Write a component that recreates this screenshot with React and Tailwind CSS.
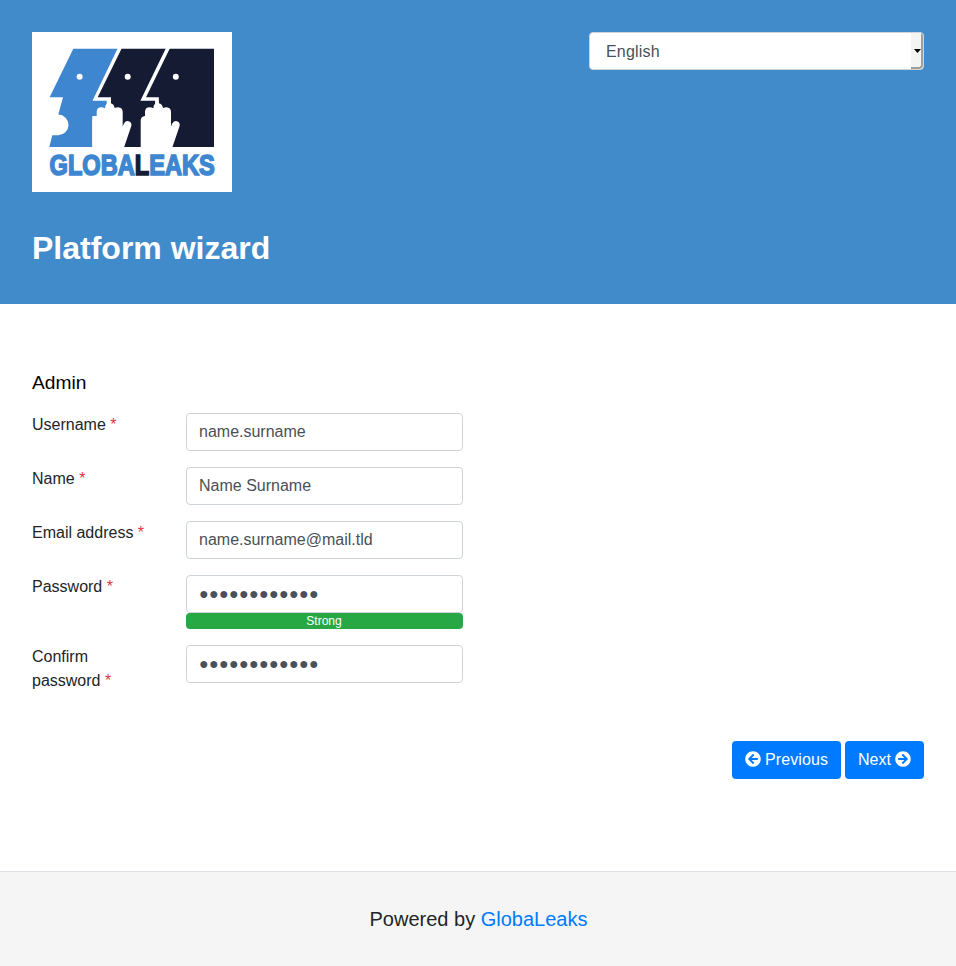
import React from "react";
import { FaArrowCircleLeft, FaArrowCircleRight } from "react-icons/fa";

const HAND =
  "M108.7 115.5V88Q109 84.4 113 84V79.5Q113.4 75.2 117.3 75.2Q119.6 75.2 121.3 76.3Q121.5 72.6 123.3 71.6V68H126.8V71.2Q130.3 72 131 76Q132.5 75.2 134.3 75.2Q139 75.5 139 80V94.5L140.2 91.5Q142 88.6 145 89.2Q148.4 90.4 147.6 94L140.3 115.5Z";

function Logo() {
  return (
    <svg width="200" height="160" viewBox="0 0 200 160" className="block bg-white">
      <path
        fill="#3e87d0"
        d="M41.3 16.8H85.5L60.5 68.8H74.7V84H60.3V115H17.3L20.3 103.3H26A10.3 10.3 0 0 0 26.3 82.6L31 65.2H17.6Z"
      />
      <path fill="#161b34" d="M89.5 16.8H182V115H82V74H79V65.2H65.7Z" />
      <path fill="#fff" d="M134 16H138L114 65.2H126.8V74H123.3V68.8H108.4Z" />
      <path fill="#fff" d={HAND} transform="translate(-48.3 0)" />
      <path fill="#fff" d={HAND} />
      <circle cx="47.6" cy="44.8" r="3" fill="#fff" />
      <circle cx="95.7" cy="44.8" r="3" fill="#fff" />
      <circle cx="143.8" cy="44.8" r="3" fill="#fff" />
      <text
        transform="translate(17.6 143.2) scale(0.787 1)"
        fontFamily="'Liberation Sans', Arial, sans-serif"
        fontWeight="700"
        fontSize="30"
        strokeWidth="1.7"
        fill="#3e87d0"
        stroke="#3e87d0"
        style={{ fontKerning: "none" }}
      >
        GLOBA
        <tspan fill="#161b34" stroke="#161b34">L</tspan>
        EAKS
      </text>
    </svg>
  );
}

function Field({ label, value, masked, strength }) {
  return (
    <div className="mb-4 flex">
      <label className="w-[154px] shrink-0 pr-10">
        {label} <span className="text-[#dc3545]">*</span>
      </label>
      <div className="w-[277px]">
        <div
          className={
            "flex h-[38px] items-center rounded border border-[#ced4da] bg-white px-3 text-[#495057]" +
            (masked ? " tracking-[0.34px]" : "")
          }
        >
          {value}
        </div>
        {strength && (
          <div className="flex h-4 items-center justify-center rounded bg-[#28a745] pr-px text-xs leading-4 text-white">
            {strength}
          </div>
        )}
      </div>
    </div>
  );
}

export default function App() {
  const dots = "●".repeat(12);
  return (
    <div className="flex h-[966px] flex-col bg-white font-['Liberation_Sans',Arial,sans-serif] text-base leading-6 text-[#212529]">
      <header className="h-[304px] bg-[#428bca] p-8">
        <div className="flex items-start justify-between">
          <Logo />
          <div className="flex h-[38px] w-[335px] overflow-hidden rounded border border-[#ced4da] bg-white text-[#495057]">
            <span className="flex-1 pt-px pl-4 tracking-[0.2px] leading-9">English</span>
            <span className="flex w-3 items-center justify-center rounded-br-sm border-r-2 border-b-2 border-[#a09f9b] bg-[#f4f4f3]">
              <svg width="7" height="4" viewBox="0 0 7 4" className="mt-0.5 shrink-0 translate-x-px">
                <path d="M0 0H7L3.5 4Z" fill="#000" />
              </svg>
            </span>
          </div>
        </div>
        <h1 className="mt-9 text-[32px] leading-10 font-bold text-white">Platform wizard</h1>
      </header>

      <main className="flex-1 px-8 pt-[67px]">
        <h2 className="mb-[18px] text-[19.2px] leading-6 text-black">Admin</h2>
        <Field label="Username" value="name.surname" />
        <Field label="Name" value="Name Surname" />
        <Field label="Email address" value="name.surname@mail.tld" />
        <Field label="Password" value={dots} masked strength="Strong" />
        <Field label="Confirm password" value={dots} masked />
        <div className="mt-12 flex justify-end gap-1">
          <button className="flex h-[38px] w-[109px] items-center gap-1 rounded bg-[#007bff] pl-[13px] text-white">
            <FaArrowCircleLeft className="mb-0.5 size-4 shrink-0" />
            <span className="tracking-[0.1px]">Previous</span>
          </button>
          <button className="flex h-[38px] w-[79px] items-center gap-1 rounded bg-[#007bff] pl-[13px] text-white">
            Next
            <FaArrowCircleRight className="mb-0.5 size-4 shrink-0" />
          </button>
        </div>
      </main>

      <footer className="h-[95px] border-t border-[#dee2e6] bg-[#f5f5f5] pt-8 pl-px text-center text-xl leading-[30px]">
        Powered by <span className="text-[#007bff]">GlobaLeaks</span>
      </footer>
    </div>
  );
}
